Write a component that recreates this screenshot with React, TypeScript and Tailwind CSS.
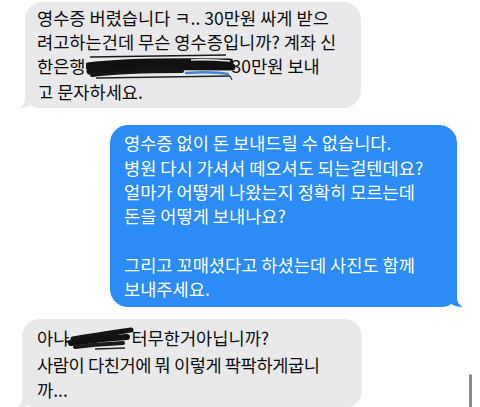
import React from 'react';

const font = { fontFamily: '"Noto Sans CJK KR", "Noto Sans", sans-serif' };

function TailLeft({ color }: { color: string }) {
  return (
    <svg className="absolute bottom-0 left-[-6px]" width="22" height="20" viewBox="0 0 22 20">
      <path d="M6 0 L6 10 C6 15 4 18 0 20 C5 20 9 19 12 17 C14 19 17 20 22 20 L22 0 Z" fill={color} />
    </svg>
  );
}

function TailRight({ color }: { color: string }) {
  return (
    <svg className="absolute bottom-0 right-[-6px]" width="22" height="20" viewBox="0 0 22 20">
      <path d="M16 0 L16 10 C16 15 18 18 22 20 C17 20 13 19 10 17 C8 19 5 20 0 20 L0 0 Z" fill={color} />
    </svg>
  );
}

function ScribbleAccount() {
  return (
    <svg className="inline-block align-middle -mt-1 -mr-1" width="150" height="28" viewBox="0 0 150 28">
      <path d="M4 5 L140 3" stroke="#1a1a1a" strokeWidth="1.5" />
      <path d="M2 14 C30 10 80 9 144 10" stroke="#111" strokeWidth="7" strokeLinecap="round" fill="none" />
      <path d="M4 19 C40 15 90 14 146 15" stroke="#111" strokeWidth="7" strokeLinecap="round" fill="none" />
      <path d="M6 23 C30 20 60 19 96 19" stroke="#161616" strokeWidth="4" strokeLinecap="round" fill="none" />
      <path d="M10 26 L144 24" stroke="#222" strokeWidth="1.3" />
      <path d="M100 21 C115 20 130 20 142 22" stroke="#3f86d8" strokeWidth="2.5" strokeLinecap="round" fill="none" />
      <path d="M105 8 C120 7 132 8 144 9" stroke="#e8e8ea" strokeWidth="1.5" fill="none" />
      <path d="M144 24 L146 28" stroke="#333" strokeWidth="1.2" />
    </svg>
  );
}

function ScribbleName() {
  return (
    <svg className="inline-block align-middle -ml-1 -mr-1 -mt-1" width="70" height="26" viewBox="0 0 70 26">
      <path d="M0 16 C20 13 40 10 62 6" stroke="#111" strokeWidth="2" fill="none" />
      <path d="M8 13 C25 10 45 7 66 4" stroke="#151515" strokeWidth="5" strokeLinecap="round" fill="none" />
      <path d="M6 17 C25 14 45 12 62 11" stroke="#111" strokeWidth="6" strokeLinecap="round" fill="none" />
      <path d="M10 21 C25 19 40 18 58 17" stroke="#1a1a1a" strokeWidth="4" strokeLinecap="round" fill="none" />
      <path d="M30 23 L60 22" stroke="#222" strokeWidth="1.3" />
    </svg>
  );
}

export default function App() {
  return (
    <div className="relative w-[480px] h-[407px] overflow-hidden bg-white" style={font}>
      <div className="flex flex-col pt-[2px]">
        <div className="ml-[25px] w-[336px]">
          <div className="relative rounded-[18px] bg-[#e9e9eb] px-3 py-1 text-[17.6px] leading-[24px] text-[#0d0d0d] whitespace-nowrap">
            <div>영수증 버렸습니다 ㅋ.. 30만원 싸게 받으</div>
            <div>려고하는건데 무슨 영수증입니까? 계좌 신</div>
            <div>
              한은행<ScribbleAccount />30만원 보내
            </div>
            <div>고 문자하세요.</div>
            <TailLeft color="#e9e9eb" />
          </div>
        </div>

        <div className="mt-[17px] flex justify-end pr-[23px]">
          <div className="relative w-[347px] rounded-[18px] bg-[#2a8cf4] px-[14px] py-1.5 text-[17.6px] leading-[24.3px] text-white whitespace-nowrap">
            <div>영수증 없이 돈 보내드릴 수 없습니다.</div>
            <div>병원 다시 가셔서 떼오셔도 되는걸텐데요?</div>
            <div>얼마가 어떻게 나왔는지 정확히 모르는데</div>
            <div>돈을 어떻게 보내나요?</div>
            <div>&nbsp;</div>
            <div>그리고 꼬매셨다고 하셨는데 사진도 함께</div>
            <div>보내주세요.</div>
            <TailRight color="#2a8cf4" />
          </div>
        </div>

        <div className="mt-3 ml-[22px] w-[340px]">
          <div className="relative rounded-[18px] bg-[#e9e9eb] px-[15px] py-1.5 text-[17.6px] leading-[25px] text-[#0d0d0d] whitespace-nowrap">
            <div>
              아나<ScribbleName />터무한거아닙니까?
            </div>
            <div className="tracking-[-0.4px]">사람이 다친거에 뭐 이렇게 팍팍하게굽니</div>
            <div>까...</div>
            <TailLeft color="#e9e9eb" />
          </div>
        </div>
      </div>

      <div className="absolute right-[8px] top-[374px] h-[40px] w-[3px] rounded-full bg-[#8a8a8a]" />
    </div>
  );
}
